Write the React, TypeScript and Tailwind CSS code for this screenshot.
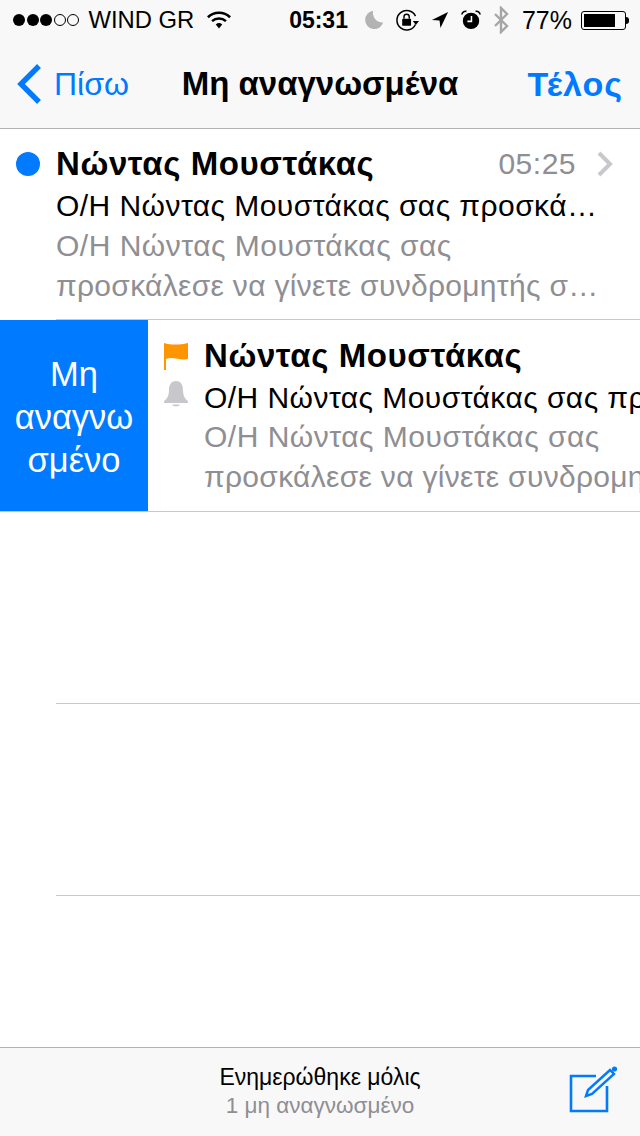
function Wifi() {
  return (
    <svg width="24" height="19" viewBox="0 0 26 20" className="ml-[13px] mt-[1px]">
      <path d="M1 6.5 A17 17 0 0 1 25 6.5" fill="none" stroke="#000" strokeWidth="2.8" />
      <path d="M5.5 10.7 A11 11 0 0 1 20.5 10.7" fill="none" stroke="#000" strokeWidth="2.8" />
      <path d="M9.5 14.2 A5.5 5.5 0 0 1 16.5 14.2 L13 18.6 Z" fill="#000" />
    </svg>
  );
}
function StatusIcons() {
  return (
    <div className="flex items-center">
      <svg width="20" height="20" viewBox="0 0 24 24" className="ml-[16px]">
        <path d="M11 1 A11 11 0 1 0 23 15 A11.5 11.5 0 0 1 11 1 Z" fill="#b3b3b3" />
      </svg>
      <svg width="25" height="23" viewBox="0 0 28 26" className="ml-[11px]">
        <path d="M23 17.5 A11 11 0 1 1 23 8" fill="none" stroke="#000" strokeWidth="1.7" />
        <path d="M20 13.5 h7 l-3.5 4.5 Z" fill="#000" />
        <rect x="8" y="11" width="10" height="8" rx="1" fill="#000" />
        <path d="M10 11 V9 a3 3 0 0 1 6 0 v2" fill="none" stroke="#000" strokeWidth="1.6" />
      </svg>
      <svg width="18" height="18" viewBox="0 0 20 20" className="ml-[11px]">
        <path d="M19 1 L1 10 L9.5 10.5 L10.5 19 Z" fill="#000" />
      </svg>
      <svg width="20" height="20" viewBox="0 0 22 22" className="ml-[12px]">
        <circle cx="11" cy="12" r="9" fill="#000" />
        <path d="M11.5 6.5 V12.5 H7" fill="none" stroke="#fff" strokeWidth="1.7" />
        <path d="M1 5 A4 4 0 0 1 6 1.5 M21 5 A4 4 0 0 0 16 1.5" fill="none" stroke="#000" strokeWidth="1.8" />
      </svg>
      <svg width="16" height="28" viewBox="0 0 16 28" className="ml-[12px]">
        <path d="M2 8 L14 20 L8 26 V2 L14 8 L2 20" fill="none" stroke="#a6a6a6" strokeWidth="2.4" />
      </svg>
      <span className="ml-[13px] text-[25px] leading-[28px]">77%</span>
      <div className="ml-[9px] flex items-center">
        <div className="flex h-[19px] w-[45px] items-center rounded-[3px] border border-black p-[2px] pr-[10px]">
          <div className="h-full w-full bg-black" />
        </div>
        <div className="h-[7px] w-[3px] rounded-r-full bg-black" />
      </div>
    </div>
  );
}
export default function App() {
  return (
    <div className="flex h-[1136px] w-[640px] flex-col overflow-hidden bg-white text-black [font-family:'Liberation_Sans',Arial,sans-serif]">
      <header className="h-[129px] shrink-0 border-b border-[#b2b2b2] bg-[#f8f8f8]">
        <div className="flex h-[40px] items-center pl-[13px] pr-[11px]">
          <div className="flex w-[278px] items-center">
            <span className="flex items-center gap-[1.5px]">
              {[0, 1, 2].map((i) => <span key={i} className="h-[12px] w-[12px] rounded-full bg-black" />)}
              {[0, 1].map((i) => <span key={i} className="h-[12px] w-[12px] rounded-full border border-black" />)}
            </span>
            <span className="ml-[9.5px] text-[23.8px]">WIND GR</span>
            <Wifi />
          </div>
          <span className="text-[23px] font-bold">05:31</span>
          <StatusIcons />
        </div>
        <div className="relative flex h-[88px] items-center justify-between pl-[16px] pr-[17px]">
          <div className="flex items-center text-[#007aff]">
            <svg width="26" height="42" viewBox="0 0 26 42">
              <path d="M23 3 L5 21 L23 39" fill="none" stroke="#007aff" strokeWidth="5.4" />
            </svg>
            <span className="ml-[12px] text-[32px]">Πίσω</span>
          </div>
          <span className="absolute left-0 right-0 text-center text-[33px] font-bold">Μη αναγνωσμένα</span>
          <span className="text-[34px] font-bold tracking-[1px] text-[#007aff]">Τέλος</span>
        </div>
      </header>

      <section className="h-[191px] shrink-0 pl-[56px]">
        <div className="relative h-full border-b border-[#c8c7cc] pt-[12px]">
          <span className="absolute left-[-40px] top-[23px] h-[24px] w-[24px] rounded-full bg-[#007aff]" />
          <div className="flex items-center justify-between pr-[26px]">
            <span className="text-[33px] font-bold leading-[40px] tracking-[0.6px]">Νώντας Μουστάκας</span>
            <span className="flex items-center text-[30px] tracking-[0.5px] text-[#8e8e93]">
              05:25
              <svg width="18" height="26" viewBox="0 0 18 26" className="ml-[20px]">
                <path d="M3 2 L14 13 L3 24" fill="none" stroke="#c7c7cc" strokeWidth="4" />
              </svg>
            </span>
          </div>
          <div className="overflow-hidden whitespace-nowrap text-[30px] leading-[40px] tracking-[0.45px] text-black">Ο/Η Νώντας Μουστάκας σας προσκά…</div>
          <div className="overflow-hidden whitespace-nowrap text-[30px] leading-[40px] tracking-[0.5px] text-[#8e8e93]">Ο/Η Νώντας Μουστάκας σας</div>
          <div className="whitespace-nowrap text-[30px] leading-[40px] tracking-[0.3px] text-[#8e8e93]">προσκάλεσε να γίνετε συνδρομητής σ…</div>
        </div>
      </section>

      <section className="flex h-[192px] shrink-0 overflow-hidden border-b border-[#c8c7cc]">
        <div className="flex w-[148px] shrink-0 items-center justify-center bg-[#007aff] pt-[3px] text-center text-[34.5px] leading-[43px] text-white">
          Μη<br />αναγνω<br />σμένο
        </div>
        <div className="relative min-w-0 flex-1 pl-[56px] pt-[16px]">
          <svg width="26" height="28" viewBox="0 0 26 28" className="absolute left-[15px] top-[22px]">
            <path d="M1 1 C8 3 16 3 25 1 V17 C17 19 10 14 3 17 V28 H1 Z" fill="#ff9500" />
          </svg>
          <svg width="26" height="28" viewBox="0 0 26 28" className="absolute left-[15px] top-[60px]">
            <path d="M13 1 C18 1 20 5 20 10 C20 16 22 19 25 21 V23 H1 V21 C4 19 6 16 6 10 C6 5 8 1 13 1 Z" fill="#c7c7cc" />
            <path d="M9 24.5 H17 C16 27 10 27 9 24.5 Z" fill="#c7c7cc" />
          </svg>
          <div className="whitespace-nowrap text-[33px] font-bold leading-[40px] tracking-[0.6px]">Νώντας Μουστάκας</div>
          <div className="mt-[2px] overflow-hidden whitespace-nowrap text-[30px] leading-[40px] tracking-[0.45px] text-black">Ο/Η Νώντας Μουστάκας σας προσκάλεσε</div>
          <div className="-mt-[1px] overflow-hidden whitespace-nowrap text-[30px] leading-[40px] tracking-[0.5px] text-[#8e8e93]">Ο/Η Νώντας Μουστάκας σας</div>
          <div className="whitespace-nowrap text-[30px] leading-[40px] tracking-[0.3px] text-[#8e8e93]">προσκάλεσε να γίνετε συνδρομητής σε</div>
        </div>
      </section>

      <div className="ml-[56px] h-[192px] shrink-0 border-b border-[#c8c7cc]" />
      <div className="ml-[56px] h-[192px] shrink-0 border-b border-[#c8c7cc]" />
      <div className="flex-1" />

      <footer className="relative flex h-[89px] shrink-0 flex-col items-center justify-center border-t border-[#b2b2b2] bg-[#f8f8f8] pb-[3px]">
        <span className="text-[23px] leading-[30px]">Ενημερώθηκε μόλις</span>
        <span className="text-[22.5px] leading-[28px] text-[#8e8e93]">1 μη αναγνωσμένο</span>
        <svg width="48" height="48" viewBox="0 0 48 48" className="absolute left-[569px] top-[18px]">
          <path d="M27 10 H2 V45 H38 V20" fill="none" stroke="#007aff" strokeWidth="2.6" />
          <path d="M17 30 L19 24 L41 4 L45 8 L23 28 Z" fill="none" stroke="#007aff" strokeWidth="2.4" />
          <circle cx="45.5" cy="3" r="2.6" fill="#007aff" />
        </svg>
      </footer>
    </div>
  );
}
